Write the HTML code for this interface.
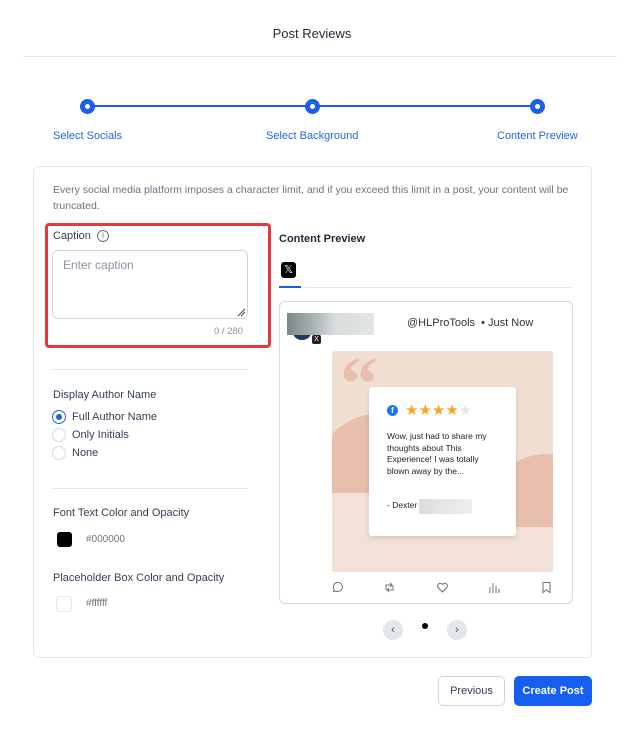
<!DOCTYPE html>
<html><head><meta charset="utf-8"><style>
*{box-sizing:border-box;margin:0;padding:0}
body{width:643px;height:737px;background:#fff;font-family:"Liberation Sans",sans-serif;position:relative;overflow:hidden;color:#1f2937}
.a{position:absolute;white-space:nowrap}
.lbl{font-size:11px;color:#344054}
.stp{font-size:11px;color:#2563eb}
.dot{position:absolute;width:15px;height:15px;border-radius:50%;background:#1d5fe8;}
.dot:after{content:"";position:absolute;left:5px;top:5px;width:5px;height:5px;border-radius:50%;background:#fff}
.radio{position:absolute;width:14px;height:14px;border-radius:50%;border:1px solid #d5d9e0;background:#fff}
.ic{position:absolute;top:581px}
</style></head><body>
<div class="a" style="left:262px;width:100px;text-align:center;top:26px;font-size:13px;color:#1f2937">Post Reviews</div>
<div class="a" style="left:23px;width:594px;top:56px;height:1px;background:#e5e7eb"></div>

<div class="a" style="left:88px;top:105px;width:449px;height:2px;background:#1d5fe8"></div>
<div class="dot" style="left:80px;top:99px"></div>
<div class="dot" style="left:305px;top:99px"></div>
<div class="dot" style="left:530px;top:99px"></div>
<div class="a stp" style="left:53px;top:130px">Select Socials</div>
<div class="a stp" style="left:266px;top:130px">Select Background</div>
<div class="a stp" style="left:497px;top:130px">Content Preview</div>

<div class="a" style="left:33px;top:166px;width:559px;height:492px;border:1px solid #e5e7eb;border-radius:5px"></div>
<div class="a" style="left:53px;top:182px;font-size:10.5px;color:#6b7280;line-height:16px;white-space:normal;width:530px">Every social media platform imposes a character limit, and if you exceed this limit in a post, your content will be truncated.</div>

<div class="a" style="left:45px;top:223px;width:226px;height:125px;border:3px solid #e5393d;border-radius:4px"></div>
<div class="a lbl" style="left:53px;top:230px;font-size:11px">Caption</div>
<div class="a" style="left:97px;top:230px;width:12px;height:12px;border:1px solid #667085;border-radius:50%;font-size:8px;text-align:center;line-height:10px;color:#667085">i</div>
<div class="a" style="left:52px;top:250px;width:196px;height:69px;border:1px solid #d0d5dd;border-radius:6px"></div>
<div class="a" style="left:63px;top:258px;font-size:12px;color:#8a94a3">Enter caption</div>
<svg class="a" style="left:237px;top:308px" width="9" height="9"><path d="M1 8L8 1M4 8L8 4" stroke="#444" stroke-width="1"/></svg>
<div class="a" style="left:214px;top:326px;font-size:9.5px;color:#8a94a3">0 / 280</div>

<div class="a" style="left:52px;top:369px;width:196px;height:1px;background:#e5e7eb"></div>
<div class="a lbl" style="left:53px;top:389px">Display Author Name</div>
<div class="radio" style="left:52px;top:410px;border:1px solid #1d5fe8"><div style="position:absolute;left:3px;top:3px;width:6px;height:6px;border-radius:50%;background:#1d5fe8"></div></div>
<div class="a lbl" style="left:72px;top:411px;font-size:11px">Full Author Name</div>
<div class="radio" style="left:52px;top:428px"></div>
<div class="a lbl" style="left:72px;top:429px">Only Initials</div>
<div class="radio" style="left:52px;top:446px"></div>
<div class="a lbl" style="left:72px;top:447px">None</div>
<div class="a" style="left:52px;top:488px;width:196px;height:1px;background:#e5e7eb"></div>
<div class="a lbl" style="left:53px;top:507px">Font Text Color and Opacity</div>
<div class="a" style="left:57px;top:532px;width:15px;height:15px;background:#000;border-radius:3px"></div>
<div class="a" style="left:86px;top:534px;font-size:10px;color:#6b7280">#000000</div>
<div class="a lbl" style="left:53px;top:572px">Placeholder Box Color and Opacity</div>
<div class="a" style="left:56px;top:596px;width:16px;height:16px;border:1px solid #e5e7eb;border-radius:3px"></div>
<div class="a" style="left:86px;top:598px;font-size:10px;color:#6b7280">#ffffff</div>

<div class="a" style="left:279px;top:233px;font-size:11px;font-weight:bold;color:#1f2937">Content Preview</div>
<div class="a" style="left:281px;top:262px;width:15px;height:16px;background:#000;border-radius:3px;color:#fff;font-size:11px;text-align:center;line-height:16px">𝕏</div>
<div class="a" style="left:279px;top:287px;width:294px;height:1px;background:#e5e7eb"></div>
<div class="a" style="left:279px;top:286px;width:22px;height:2px;background:#1d5fe8"></div>

<div class="a" style="left:279px;top:301px;width:294px;height:303px;border:1px solid #d5d9e0;border-radius:6px"></div>
<div class="a" style="left:292px;top:328px;width:20px;height:12px;background:#1e3a5f;border-radius:0 0 10px 10px"></div>
<div class="a" style="left:287px;top:313px;width:87px;height:22px;background:linear-gradient(90deg,#7c8789,#aab2b3 30%,#d8dcdd 55%,#e2e4e5)"></div>
<div class="a" style="left:312px;top:335px;width:9px;height:9px;background:#222;border-radius:2px;color:#fff;font-size:7px;text-align:center;line-height:9px">X</div>
<div class="a" style="left:407px;top:317px;font-size:11px;color:#333">@HLProTools &nbsp;• Just Now</div>

<div class="a" style="left:332px;top:351px;width:221px;height:221px;background:#f1ded2;border-radius:3px;overflow:hidden">
<div style="position:absolute;left:-20px;top:62px;width:140px;height:140px;border-radius:50%;background:#e8bead"></div>
<div style="position:absolute;left:0;top:142px;width:221px;height:79px;background:#f1e1d7"></div>
<div style="position:absolute;left:150px;top:103px;width:130px;height:130px;border-radius:50%;background:#e8bead"></div>
<div style="position:absolute;left:150px;top:176px;width:80px;height:50px;background:#f1e1d7"></div>
<div style="position:absolute;left:8px;top:-10px;font-size:76px;font-family:'Liberation Serif',serif;color:#e8bead;font-weight:bold">“</div>
</div>
<div class="a" style="left:369px;top:387px;width:147px;height:149px;background:#fff;border-radius:3px;box-shadow:0 2px 6px rgba(0,0,0,.12)"></div>
<div class="a" style="left:387px;top:405px;width:11px;height:11px;border-radius:50%;background:#1877f2;color:#fff;font-size:8px;font-weight:bold;text-align:center;line-height:12px">f</div>
<div class="a" style="left:405px;top:401px;font-size:15px;color:#f6a623;letter-spacing:0px">★★★★<span style="color:#e5e7eb">★</span></div>
<div class="a" style="left:387px;top:431px;font-size:8.5px;line-height:11.5px;color:#222;white-space:normal;width:115px">Wow, just had to share my thoughts about This Experience! I was totally blown away by the...</div>
<div class="a" style="left:387px;top:500px;font-size:8.5px;color:#222">- Dexter</div>
<div class="a" style="left:419px;top:499px;width:53px;height:15px;background:linear-gradient(90deg,#ddd,#eee)"></div>

<svg class="ic" style="left:331px" width="13" height="13" viewBox="0 0 13 13"><path d="M2.5 10.5l.6-2.2A4.5 4.5 0 1 1 5 10z" fill="none" stroke="#6b7280" stroke-width="1"/></svg>
<svg class="ic" style="left:383px" width="13" height="13" viewBox="0 0 13 13"><path d="M3 9V4h6M7 2l2 2-2 2M10 4v5H4M6 11L4 9l2-2" fill="none" stroke="#6b7280" stroke-width="1"/></svg>
<svg class="ic" style="left:436px" width="13" height="13" viewBox="0 0 13 13"><path d="M6.5 11L2 6.5A2.4 2.4 0 0 1 6.5 3.5 2.4 2.4 0 0 1 11 6.5z" fill="none" stroke="#6b7280" stroke-width="1"/></svg>
<svg class="ic" style="left:488px" width="13" height="13" viewBox="0 0 13 13"><path d="M2 12V6M5 12V2M8 12V5M11 12V8" stroke="#6b7280" stroke-width="1"/></svg>
<svg class="ic" style="left:540px" width="13" height="13" viewBox="0 0 13 13"><path d="M3 1.5h7v10L6.5 9 3 11.5z" fill="none" stroke="#6b7280" stroke-width="1"/></svg>

<div class="a" style="left:383px;top:620px;width:20px;height:20px;border-radius:50%;background:#e2e7ee;color:#555;font-size:11px;text-align:center;line-height:20px">‹</div>
<div class="a" style="left:422px;top:623px;width:6px;height:6px;border-radius:50%;background:#000"></div>
<div class="a" style="left:447px;top:620px;width:20px;height:20px;border-radius:50%;background:#e2e7ee;color:#555;font-size:11px;text-align:center;line-height:20px">›</div>

<div class="a" style="left:438px;top:676px;width:67px;height:30px;border:1px solid #d0d5dd;border-radius:5px;font-size:11px;color:#344054;text-align:center;line-height:28px">Previous</div>
<div class="a" style="left:514px;top:676px;width:78px;height:30px;background:#155eef;border-radius:5px;font-size:11px;font-weight:bold;color:#fff;text-align:center;line-height:30px">Create Post</div>
</body></html>
